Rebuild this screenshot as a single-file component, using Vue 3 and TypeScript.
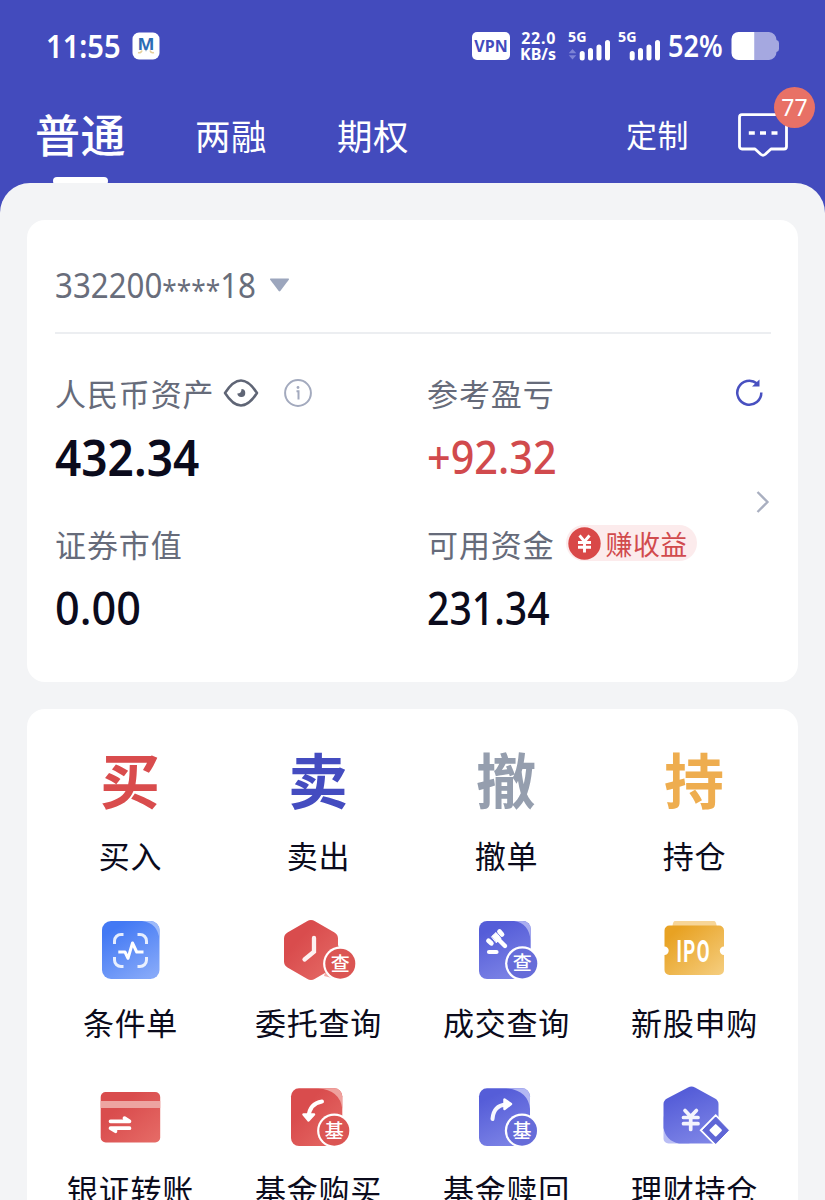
<script setup lang="ts">
interface BigAction {
  glyph: string
  label: string
  tone: string
}

interface IconAction {
  icon: string
  label: string
}

const bigActions: BigAction[] = [
  { glyph: '买', label: '买入', tone: 'red' },
  { glyph: '卖', label: '卖出', tone: 'indigo' },
  { glyph: '撤', label: '撤单', tone: 'grey' },
  { glyph: '持', label: '持仓', tone: 'amber' },
]

const iconActions: IconAction[] = [
  { icon: 'condition', label: '条件单' },
  { icon: 'entrust', label: '委托查询' },
  { icon: 'deal', label: '成交查询' },
  { icon: 'ipo', label: '新股申购' },
  { icon: 'bank', label: '银证转账' },
  { icon: 'fund-buy', label: '基金购买' },
  { icon: 'fund-sell', label: '基金赎回' },
  { icon: 'wealth', label: '理财持仓' },
]
</script>

<template>
  <div class="screen">
    <svg class="defs" width="0" height="0" aria-hidden="true">
      <defs>
        <linearGradient id="g-blue" x1="0.2" y1="0" x2="0.8" y2="1">
          <stop offset="0.1" stop-color="#4379f4" />
          <stop offset="1" stop-color="#86a9f9" />
        </linearGradient>
        <linearGradient id="g-red" x1="0" y1="0" x2="1" y2="1">
          <stop offset="0.3" stop-color="#d94c4d" />
          <stop offset="1" stop-color="#e66c67" />
        </linearGradient>
        <linearGradient id="g-violet" x1="0.3" y1="0" x2="0.7" y2="1">
          <stop offset="0.1" stop-color="#555dd8" />
          <stop offset="1" stop-color="#7d84e6" />
        </linearGradient>
        <linearGradient id="g-gold" x1="0" y1="0" x2="1" y2="1">
          <stop offset="0.15" stop-color="#e8a223" />
          <stop offset="1" stop-color="#f5ce80" />
        </linearGradient>
      </defs>
    </svg>

    <header class="header">
      <div class="status">
        <span class="time"><span class="squeeze">11:55</span></span>
        <svg class="app-logo" width="28" height="28" viewBox="0 0 28 28">
          <rect x="0.5" y="0.5" width="27" height="27" rx="6.5" fill="#fff" />
          <text x="5.500" y="17.500" font-size="16.500" font-weight="700" fill="#2c6cb5" textLength="17" lengthAdjust="spacingAndGlyphs">M</text>
          <path d="M6 20.5q3 1 4-2M22 20.5q-3 1-4-2" fill="none" stroke="#e5cf9a" stroke-width="1.6" />
          <circle cx="14" cy="18.6" r="0.8" fill="#9bb4cf" />
        </svg>
        <span class="vpn">VPN</span>
        <span class="speed"><b>22.0</b><b>KB/s</b></span>
        <svg class="signal" width="44" height="36" viewBox="0 -3 44 36">
          <text x="0" y="11" font-size="14" font-weight="700" fill="#fff" textLength="18.500" lengthAdjust="spacingAndGlyphs">5G</text>
          <path d="M4.500 18l3.800 4.300H0.700zM4.500 28.500l3.800-4.300H0.700z" fill="#7d83d6" />
          <path d="M14.200 22.500v4.500M22.500 19.500v7.500M31 16v11M39.500 11.500v15.500" stroke="#fff" stroke-width="5" stroke-linecap="round" />
        </svg>
        <svg class="signal second" width="44" height="36" viewBox="0 -3 44 36">
          <text x="0" y="11" font-size="14" font-weight="700" fill="#fff" textLength="18.500" lengthAdjust="spacingAndGlyphs">5G</text>
          <path d="M14.200 22.500v4.500M22.500 19.500v7.500M31 16v11M39.500 11.500v15.500" stroke="#fff" stroke-width="5" stroke-linecap="round" />
        </svg>
        <span class="percent"><span class="squeeze">52%</span></span>
        <svg class="battery" width="48" height="28" viewBox="0 0 48 28">
          <path d="M23.500 0H38a8 8 0 0 1 7.500 8q2.500 .5 2.500 3v6q0 2.500-2.500 3a8 8 0 0 1-7.500 8H23.500z" fill="#a5a8e0" />
          <path d="M23.500 0H7.500a7 7 0 0 0-7 7v14a7 7 0 0 0 7 7h16z" fill="#fff" />
        </svg>
      </div>
      <nav class="tabs">
        <span class="tab active">普通</span>
        <span class="tab second">两融</span>
        <span class="tab third">期权</span>
        <span class="customize">定制</span>
        <span class="messages">
          <svg width="50" height="45" viewBox="0 0 50 45">
            <path d="M4 1.700H46a2.500 2.500 0 0 1 2.500 2.500V33.500a2.500 2.500 0 0 1-2.500 2.500H33L27 41.500q-2 1.500-4 0L17 36H4a2.500 2.500 0 0 1-2.500-2.500V4.200A2.500 2.500 0 0 1 4 1.700z" fill="none" stroke="#fff" stroke-width="2.800" stroke-linejoin="round" />
            <path d="M10.800 20h6M22 20h6M33.500 20h6" stroke="#fff" stroke-width="3.600" />
          </svg>
          <span class="count">77</span>
        </span>
      </nav>
      <span class="underline"></span>
    </header>

    <main class="sheet">
      <section class="card account">
        <div class="account-row">
          <span class="account-no"><span class="squeeze">332200<i>****</i>18</span></span>
          <svg width="21" height="14" viewBox="0 0 21 14"><path d="M1.500 .5h18q1 .3.300 1.300L11.300 13q-.8.800-1.600 0L1.200 1.800q-.7-1 .3-1.300z" fill="#9ca6bd" /></svg>
        </div>
        <div class="assets">
          <div class="asset">
            <div class="asset-label">
              人民币资产
              <svg class="eye" width="36" height="28" viewBox="0 0 36 28">
                <path d="M2 14Q10 1.500 18 1.500T34 14Q26 26.500 18 26.500T2 14z" fill="none" stroke="#5f6575" stroke-width="2.500" stroke-linejoin="round" />
                <path d="M18.500 10a4 4 0 1 1-4.200 4.500q4.200 0 4.200-4.500z" fill="#5f6575" />
              </svg>
              <svg class="info" width="28" height="28" viewBox="0 0 28 28">
                <circle cx="14" cy="14" r="12.900" fill="none" stroke="#a3aabe" stroke-width="2" />
                <path d="M12.500 12.200h2v8.300" fill="none" stroke="#a3aabe" stroke-width="2" />
                <circle cx="14" cy="8.500" r="1.400" fill="#a3aabe" />
              </svg>
            </div>
            <div class="value total"><span class="squeeze">432.34</span></div>
          </div>
          <div class="asset">
            <div class="asset-label">参考盈亏</div>
            <div class="value profit"><span class="squeeze">+92.32</span></div>
          </div>
          <div class="side">
            <svg width="30" height="30" viewBox="0 0 30 30">
              <path d="M27.300 14.500A12 12 0 1 1 23 5.500" fill="none" stroke="#4850c0" stroke-width="2.500" />
              <path d="M25.500 1.500v7h-7.500z" fill="#4850c0" />
            </svg>
            <svg class="chevron" width="16" height="24" viewBox="0 0 16 24">
              <path d="M3.500 2l10 10-10 10" fill="none" stroke="#a9afc0" stroke-width="2.300" />
            </svg>
          </div>
          <div class="asset">
            <div class="asset-label">证券市值</div>
            <div class="value zero"><span class="squeeze">0.00</span></div>
          </div>
          <div class="asset">
            <div class="asset-label">
              可用资金
              <span class="earn">
                <svg width="33" height="33" viewBox="0 0 33 33">
                  <circle cx="16.500" cy="16.500" r="16.200" fill="#d94848" />
                  <path d="M11.500 8.500l5 6 5-6M10 15.500h13M10 20.300h13M16.500 14.500v11" fill="none" stroke="#fff" stroke-width="2.900" />
                </svg>
                赚收益
              </span>
            </div>
            <div class="value cash"><span class="squeeze">231.34</span></div>
          </div>
        </div>
      </section>

      <section class="card actions">
        <div v-for="item in bigActions" :key="item.label" class="action">
          <span class="glyph" :class="item.tone">{{ item.glyph }}</span>
          <span class="label">{{ item.label }}</span>
        </div>
        <div v-for="item in iconActions" :key="item.label" class="action">
          <svg class="icon" width="76" height="68" viewBox="0 0 76 68">
            <g v-if="item.icon === 'condition'">
              <rect x="10" y="5" width="57.500" height="58" rx="9" fill="url(#g-blue)" />
              <path d="M50 5Q66 7 67.500 24V14a9 9 0 0 0-9-9z" fill="#9dbafa" />
              <g fill="none" stroke="#fff" stroke-width="3">
                <path d="M22.500 28v-3a6.500 6.500 0 0 1 6.500-6.500h2.500M45.500 18.500H48a6.500 6.500 0 0 1 6.500 6.500v3M54.500 41v3a6.500 6.500 0 0 1-6.500 6.500h-2.500M31.500 50.500H29a6.500 6.500 0 0 1-6.500-6.500v-3" opacity="0.850" />
                <path d="M26.300 36h6.700l3 6.300 4.500-15.300 4.200 9h6.800" stroke-linejoin="round" />
              </g>
            </g>

            <g v-else-if="item.icon === 'entrust'">
              <path d="M56 26L60 32L52 62L44 60z" fill="#f3aaa5" />
              <path d="M27 5.200q4-2.400 8 0L54.500 16.500q3.500 2.200 3.500 6v23q0 3.800-3.500 6L35 62.800q-4 2.400-8 0L7.500 51.500Q4 49.300 4 45.500v-23q0-3.800 3.500-6z" fill="url(#g-red)" />
              <path d="M34 22v13.700L24.500 43.500" fill="none" stroke="#fff" stroke-opacity="0.920" stroke-width="4.300" stroke-linecap="round" />
              <circle cx="60.300" cy="47.700" r="17.200" fill="#fff" />
              <circle cx="60.300" cy="47.700" r="15" fill="#db5553" />
              <text x="60.300" y="54.500" text-anchor="middle" font-size="19" font-weight="500" fill="#fff">查</text>
            </g>

            <g v-else-if="item.icon === 'deal'">
              <rect x="11" y="5" width="51.700" height="58" rx="8" fill="url(#g-violet)" />
              <path d="M46 5Q61 7 62.700 25V13a8 8 0 0 0-8-8z" fill="#a9adf0" />
              <g stroke="#fff" stroke-linecap="round">
                <path d="M20.500 24.800l2.800 2.500M31.500 15.500l2.500 3" fill="none" stroke-width="4.800" />
                <path d="M30 23l7 7" fill="none" stroke-width="4.400" />
                <path d="M21 36h7.500" fill="none" stroke-width="4.200" />
                <path d="M23.700 20.500l4.300-4 5 6-4.500 4z" fill="#fff" stroke-width="1" />
              </g>
              <circle cx="54.300" cy="47.500" r="17.200" fill="#fff" />
              <circle cx="54.300" cy="47.500" r="15" fill="#666cd9" />
              <text x="54.300" y="54.300" text-anchor="middle" font-size="19" font-weight="500" fill="#fff">查</text>
            </g>

            <g v-else-if="item.icon === 'ipo'">
              <path d="M19 5h39q2 0 2.700 5H16.500q.5-5 2.500-5z" fill="#f7d597" />
              <path d="M13.500 9.500h49.500a5 5 0 0 1 5 5V30.500a4.200 4.200 0 0 0 0 8.400V54a5 5 0 0 1-5 5H13.500a5 5 0 0 1-5-5V38.900a4.200 4.200 0 0 0 0-8.400V14.500a5 5 0 0 1 5-5z" fill="url(#g-gold)" />
              <text class="ipo-text" transform="translate(20.500 46) scale(0.58 1)" font-size="32" font-weight="700" letter-spacing="2.500" fill="#fff">IPO</text>
            </g>

            <g v-else-if="item.icon === 'bank'">
              <rect x="8.700" y="9" width="59.500" height="50.500" rx="5" fill="url(#g-red)" />
              <rect x="8.700" y="18" width="59.500" height="7" fill="#eda4a1" />
              <path d="M18.500 38.300h19l-5-3.200M37.500 45.200h-19l5 3" fill="none" stroke="#fff" stroke-width="3.700" stroke-linecap="round" stroke-linejoin="round" />
            </g>

            <g v-else-if="item.icon === 'fund-buy'">
              <rect x="11" y="5.300" width="51.300" height="57.700" rx="8" fill="url(#g-red)" />
              <path d="M38 5.300Q60 7 62.300 26V13.300a8 8 0 0 0-8-8z" fill="#efa19d" />
              <path d="M42 18.500Q29.500 20.500 28.500 34" fill="none" stroke="#fff" stroke-width="4" stroke-linecap="round" />
              <path d="M23.500 31.500h10.500l-5.500 6z" fill="#fff" stroke="#fff" stroke-width="2.500" stroke-linejoin="round" />
              <circle cx="54.300" cy="47.700" r="17.200" fill="#fff" />
              <circle cx="54.300" cy="47.700" r="15" fill="#db5553" />
              <text x="54.300" y="54.500" text-anchor="middle" font-size="19" font-weight="500" fill="#fff">基</text>
            </g>

            <g v-else-if="item.icon === 'fund-sell'">
              <rect x="11" y="5.300" width="51" height="57.700" rx="8" fill="url(#g-violet)" />
              <path d="M38 5.300Q60 7 62 26V13.300a8 8 0 0 0-8-8z" fill="#b4b8f3" />
              <path d="M24.500 36Q25.500 22.500 38 21.500" fill="none" stroke="#fff" stroke-opacity="0.950" stroke-width="4" stroke-linecap="round" />
              <path d="M36.500 16.500v9.500l6.500-5z" fill="#fff" stroke="#fff" stroke-width="2.500" stroke-linejoin="round" />
              <circle cx="54" cy="47.700" r="17.200" fill="#fff" />
              <circle cx="54" cy="47.700" r="15" fill="#666cd9" />
              <text x="54" y="54.500" text-anchor="middle" font-size="19" font-weight="500" fill="#fff">基</text>
            </g>

            <g v-else>
              <rect x="7.500" y="30" width="30" height="30.500" rx="5" fill="#b9bdf4" />
              <path d="M32 4.500q3.500-2 7 0L59 15.500q3.500 2 3.500 5.500V55.500a5 5 0 0 1-5 5H23Q10 58 7.500 45V21q0-3.500 3.500-5.500z" fill="url(#g-violet)" />
              <path d="M29 27.500l5.700 6 5.700-6M27.500 34.500H42M27.500 40.700H42M34.700 34v12.500" fill="none" stroke="#fff" stroke-opacity="0.920" stroke-width="3.700" stroke-linecap="round" />
              <path d="M43.500 47.300L59.700 31 76 47.300 59.700 63.500z" fill="#fff" />
              <path d="M46.700 47.300L59.700 34 72.500 47.300 59.700 60.500z" fill="#5f66d6" stroke="#5f66d6" stroke-width="1" stroke-linejoin="round" />
              <path d="M54.500 47.300l5.200-5.200 5.200 5.200-5.200 5.200z" fill="#fff" stroke="#fff" stroke-width="2" stroke-linejoin="round" />
            </g>
          </svg>
          <span class="label">{{ item.label }}</span>
        </div>
      </section>
    </main>
  </div>
</template>

<style>
body {
  margin: 0;
  overflow: hidden;
}
</style>

<style scoped>
.screen {
  width: 825px;
  height: 1200px;
  overflow: hidden;
  position: relative;
  background: #434bbd;
  font-family: "Noto Sans", "Noto Sans CJK SC", sans-serif;
  color: #0b0b1c;
}

.screen svg {
  display: block;
  flex: none;
}

.defs {
  position: absolute;
}

.squeeze {
  display: inline-block;
  transform: scaleX(0.92);
  transform-origin: left center;
  white-space: nowrap;
}

.header {
  height: 183px;
  color: #fff;
  position: relative;
}

.status {
  height: 92px;
  display: flex;
  align-items: center;
  padding-left: 46px;
}

.time {
  width: 86px;
  font-size: 32px;
  line-height: 44px;
  font-weight: 600;
}

.time .squeeze {
  transform: scaleX(0.91);
}

.vpn {
  margin-left: 312px;
  width: 38px;
  height: 28px;
  line-height: 28px;
  border-radius: 5px;
  background: #fff;
  color: #434bbd;
  text-align: center;
  font-size: 16px;
  font-weight: 700;
}

.speed {
  width: 46px;
  text-align: right;
  display: flex;
  flex-direction: column;
  font-size: 16px;
  line-height: 16px;
}

.speed b {
  font-weight: 700;
}

.speed b:first-child {
  letter-spacing: 0.7px;
}

.signal {
  margin-left: 12px;
}

.signal.second {
  margin-left: 6px;
}

.percent {
  width: 63px;
  margin-left: 6px;
  font-size: 30px;
  line-height: 42px;
  font-weight: 600;
}

.percent .squeeze {
  transform: scaleX(0.9);
}

.tabs {
  height: 88px;
  display: flex;
  align-items: center;
  padding-left: 35px;
  white-space: nowrap;
}

.tabs > * {
  flex: none;
}

.tab {
  width: 72px;
  font-size: 35.5px;
  line-height: 50px;
  letter-spacing: 0.5px;
}

.tab.active {
  width: 92px;
  font-size: 45px;
  font-weight: 500;
}

.tab.second {
  margin-left: 68px;
}

.tab.third {
  margin-left: 70px;
}

.customize {
  margin-left: 217px;
  width: 64px;
  font-size: 31px;
  line-height: 43px;
  letter-spacing: 0.5px;
  margin-bottom: 2px;
}

.messages {
  margin-left: 48px;
  margin-bottom: 1px;
  position: relative;
}

.count {
  position: absolute;
  left: 36px;
  top: -26px;
  width: 41px;
  height: 41px;
  line-height: 41px;
  border-radius: 50%;
  background: #e87166;
  text-align: center;
  font-size: 23px;
}

.underline {
  position: absolute;
  left: 53px;
  top: 177px;
  width: 55px;
  height: 8px;
  border-radius: 4px;
  background: #fff;
}

.sheet {
  position: relative;
  height: 1017px;
  box-sizing: border-box;
  padding: 37px 27px 0;
  border-radius: 30px 30px 0 0;
  background: #f3f4f6;
}

.card {
  background: #fff;
  border-radius: 18px;
}

.account {
  height: 462px;
  box-sizing: border-box;
  padding: 18px 27px 0 28px;
}

.account-row {
  height: 94px;
  display: flex;
  align-items: center;
  border-bottom: 2px solid #eceef1;
}

.account-no {
  width: 214px;
  font-size: 34px;
  line-height: 46px;
  color: #686d7b;
}

.account-no i {
  font-style: normal;
  font-size: 28.5px;
  line-height: 0;
  vertical-align: -3px;
}

.assets {
  display: grid;
  grid-template-columns: 372px 307px 36px;
  grid-template-rows: 151px 151px;
  padding-top: 37px;
}

.asset-label {
  display: flex;
  align-items: center;
  height: 42px;
  font-size: 31px;
  letter-spacing: 0.9px;
  color: #666b7a;
  white-space: nowrap;
}

.eye {
  margin: 1px 0 0 8px;
}

.info {
  margin: 1px 0 0 25px;
}

.value {
  height: 60px;
  margin-top: 14px;
  line-height: 60px;
  font-size: 45px;
  font-weight: 500;
}

.value.total {
  font-size: 50px;
  font-weight: 600;
}

.value.profit {
  color: #d14a4d;
}

.value.zero .squeeze {
  transform: scaleX(0.96);
}

.value.cash .squeeze {
  transform: scaleX(0.87);
}

.side {
  grid-row: 1 / 3;
  grid-column: 3;
  padding-top: 7px;
}

.chevron {
  margin: 82px 0 0 20px;
}

.earn {
  display: flex;
  align-items: center;
  gap: 5px;
  box-sizing: border-box;
  width: 131px;
  height: 36px;
  margin-left: 11px;
  padding-left: 2px;
  border-radius: 18px;
  background: #fcebec;
  color: #d14a4d;
  font-size: 27px;
  letter-spacing: 0.3px;
}

.actions {
  margin-top: 27px;
  height: 560px;
  box-sizing: border-box;
  padding: 40px 10px 0 9px;
  display: grid;
  grid-template-columns: repeat(4, 188px);
  grid-auto-rows: 167px;
  align-content: start;
}

.action {
  display: flex;
  flex-direction: column;
  align-items: center;
}

.glyph {
  height: 68px;
  line-height: 65px;
  font-size: 60px;
  font-weight: 700;
}

.glyph.red {
  color: #d94c4d;
}

.glyph.indigo {
  color: #444cc0;
}

.glyph.grey {
  color: #959eae;
}

.glyph.amber {
  color: #eead4f;
}

.label {
  height: 44px;
  margin: 17px 0 0 1px;
  line-height: 44px;
  font-size: 31px;
  letter-spacing: 0.7px;
  white-space: nowrap;
}

.ipo-text {
  font-family: Roboto, "Noto Sans", sans-serif;
}
</style>
